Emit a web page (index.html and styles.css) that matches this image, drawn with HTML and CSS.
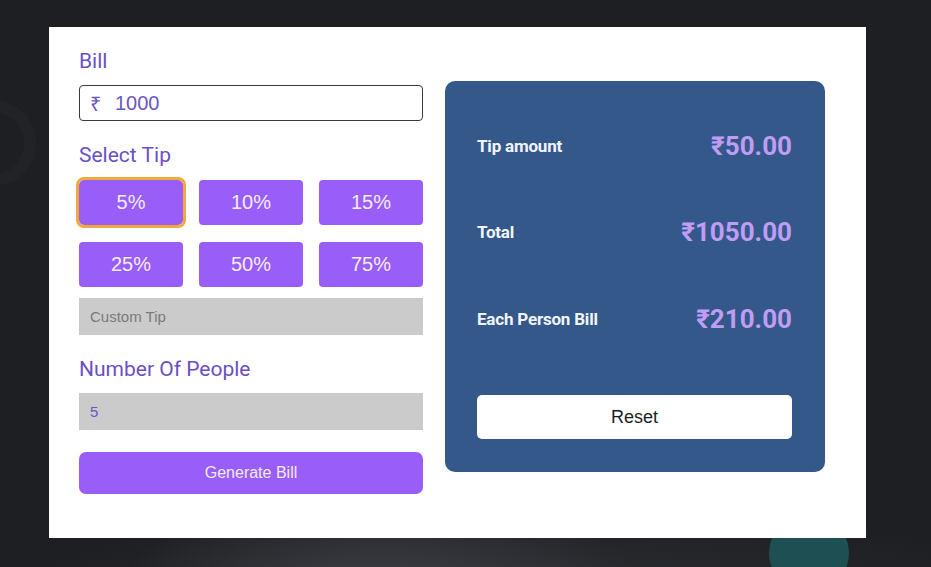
FILE: index.html
```html
<!DOCTYPE html>
<html lang="en">
<head>
<meta charset="utf-8">
<title>Tip Calculator</title>
<link rel="stylesheet" href="styles.css">
</head>
<body>
<div class="deco deco-ring"></div>
<div class="deco deco-teal"></div>
<main class="card">
  <section class="form">
    <label class="label label-bill">Bill</label>
    <div class="bill-input">
      <span class="rupee">₹</span>
      <span class="bill-value">1000</span>
    </div>
    <label class="label label-tip">Select Tip</label>
    <div class="tip-grid">
      <button class="tip active">5%</button>
      <button class="tip">10%</button>
      <button class="tip">15%</button>
      <button class="tip">25%</button>
      <button class="tip">50%</button>
      <button class="tip">75%</button>
    </div>
    <div class="field custom">Custom Tip</div>
    <label class="label label-people">Number Of People</label>
    <div class="field people">5</div>
    <button class="generate">Generate Bill</button>
  </section>
  <section class="summary">
    <div class="row">
      <span class="row-label">Tip amount</span>
      <span class="row-value">₹50.00</span>
    </div>
    <div class="row">
      <span class="row-label">Total</span>
      <span class="row-value">₹1050.00</span>
    </div>
    <div class="row last">
      <span class="row-label">Each Person Bill</span>
      <span class="row-value">₹210.00</span>
    </div>
    <button class="reset">Reset</button>
  </section>
</main>
</body>
</html>
```

FILE: styles.css
```css
* { box-sizing: border-box; }

html, body {
  margin: 0;
  height: 100%;
}

body {
  position: relative;
  overflow: hidden;
  padding: 27px 0 0 49px;
  background:
    radial-gradient(ellipse 260px 90px at 380px 585px, #3b3c41 0%, rgba(59,60,65,0) 100%),
    radial-gradient(ellipse 520px 110px at 520px 610px, #2f3035 0%, rgba(47,48,53,0) 100%),
    #1e1f23;
  font-family: "Liberation Sans", Arial, sans-serif;
}

.deco { position: absolute; border-radius: 50%; }
.deco-ring {
  left: -50px;
  top: 100px;
  width: 86px;
  height: 86px;
  border: 12px solid #222327;
}
.deco-teal {
  left: 769px;
  top: 513px;
  width: 80px;
  height: 80px;
  background: #1e4f52;
}

.card {
  position: relative;
  width: 817px;
  height: 511px;
  background: #ffffff;
  display: flex;
  align-items: flex-start;
  padding: 20px 41px 0 30px;
  gap: 22px;
}

.form {
  width: 344px;
  display: flex;
  flex-direction: column;
}

.label {
  font-family: Roboto, "Liberation Sans", sans-serif;
  font-size: 21px;
  line-height: 25px;
  color: #6b4fc6;
}
.label-bill { margin-top: 2px; }
.label-tip { margin-top: 22px; }
.label-people { margin-top: 22px; }

.bill-input {
  margin-top: 11px;
  height: 36px;
  border: 1px solid #3a3a3a;
  border-radius: 4px;
  display: flex;
  align-items: center;
  padding-left: 10px;
  font-size: 20px;
  color: #6a56c4;
}
.rupee { width: 25px; }

.tip-grid {
  margin-top: 12px;
  display: grid;
  grid-template-columns: repeat(3, 104px);
  column-gap: 16px;
  row-gap: 17px;
}

.tip {
  height: 45px;
  border: none;
  border-radius: 4px;
  background: #9a5ef8;
  color: #f3ecff;
  font-family: "Liberation Sans", Arial, sans-serif;
  font-size: 20px;
  padding: 0;
}
.tip.active {
  outline: 3px solid #f0a93a;
  outline-offset: 0;
  border-radius: 5px;
}

.field {
  height: 37px;
  background: #cbcbcb;
  display: flex;
  align-items: center;
  padding-left: 11px;
  font-size: 15px;
}
.custom {
  margin-top: 11px;
  color: #7a7a7a;
}
.people {
  margin-top: 11px;
  color: #6a56c4;
}

.generate {
  margin-top: 22px;
  height: 42px;
  border: none;
  border-radius: 7px;
  background: #9a5ef8;
  color: #f1eaff;
  font-family: "Liberation Sans", Arial, sans-serif;
  font-size: 16px;
}

.summary {
  margin-top: 34px;
  width: 380px;
  height: 391px;
  background: #34588a;
  border-radius: 10px;
  display: flex;
  flex-direction: column;
  padding: 40px 33px 0 32px;
}

.row {
  height: 50px;
  margin-bottom: 37px;
  display: flex;
  align-items: center;
  justify-content: space-between;
  font-family: Roboto, "Liberation Sans", sans-serif;
}
.row:first-child { margin-bottom: 36px; }
.row.last { margin-bottom: 51px; }

.row-label {
  font-size: 17px;
  font-weight: 700;
  color: #f2f4fb;
  letter-spacing: -0.2px;
}
.row-value {
  font-size: 26px;
  font-weight: 700;
  color: #bf9df3;
}

.reset {
  height: 44px;
  border: none;
  border-radius: 5px;
  background: #ffffff;
  color: #1e1e1e;
  font-family: "Liberation Sans", Arial, sans-serif;
  font-size: 18px;
}
```
